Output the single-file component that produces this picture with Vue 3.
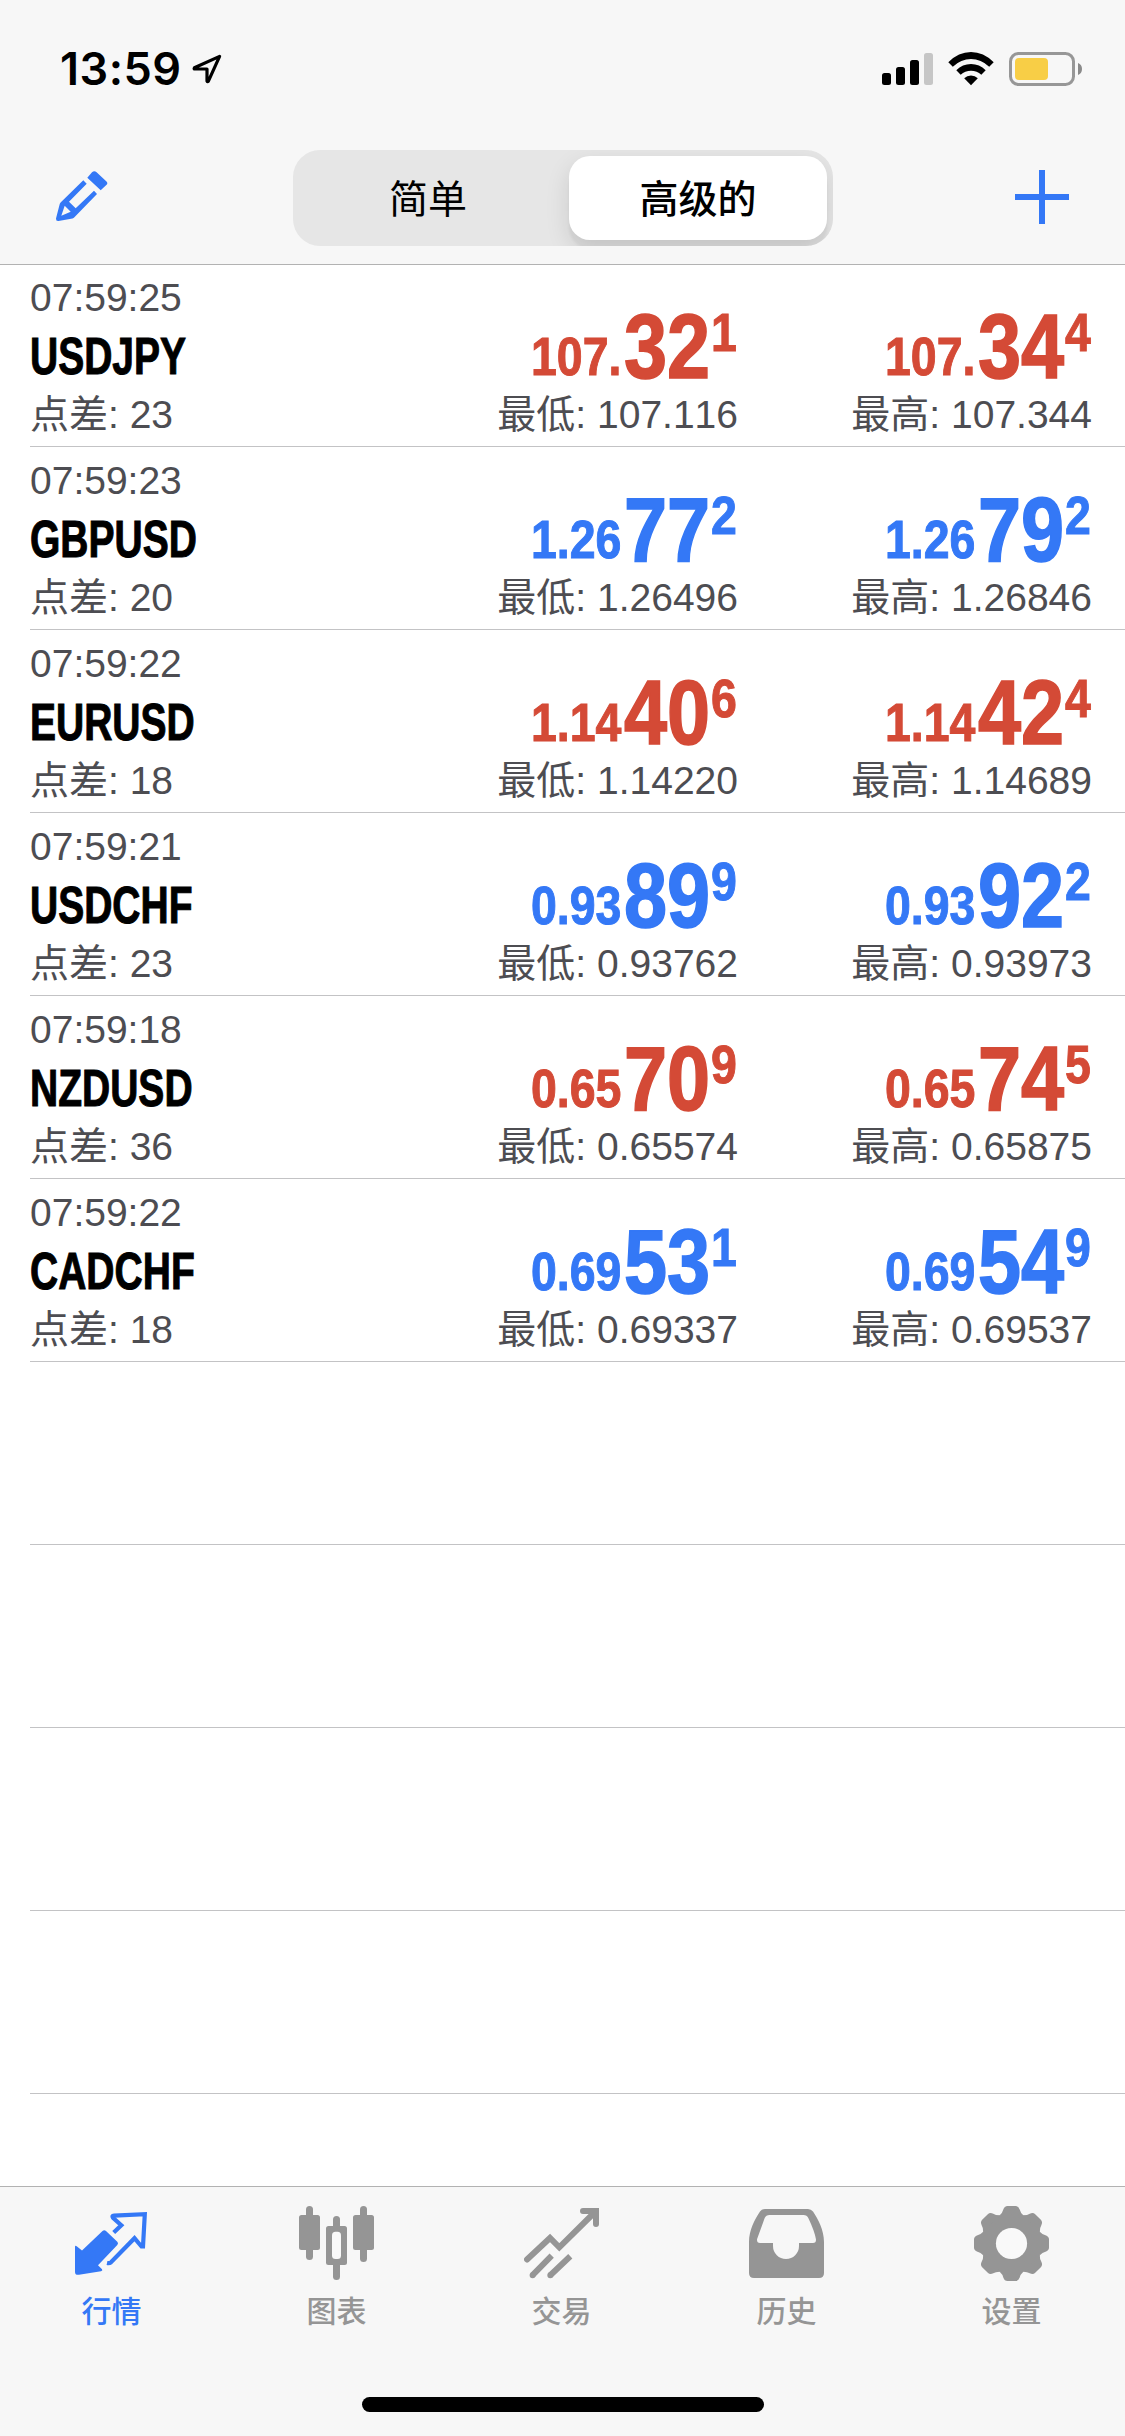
<script setup>
const quotes = [
  { time: '07:59:25', symbol: 'USDJPY', spread: '23', dir: 'down', bid: ['107.', '32', '1'], ask: ['107.', '34', '4'], low: '107.116', high: '107.344' },
  { time: '07:59:23', symbol: 'GBPUSD', spread: '20', dir: 'up', bid: ['1.26', '77', '2'], ask: ['1.26', '79', '2'], low: '1.26496', high: '1.26846' },
  { time: '07:59:22', symbol: 'EURUSD', spread: '18', dir: 'down', bid: ['1.14', '40', '6'], ask: ['1.14', '42', '4'], low: '1.14220', high: '1.14689' },
  { time: '07:59:21', symbol: 'USDCHF', spread: '23', dir: 'up', bid: ['0.93', '89', '9'], ask: ['0.93', '92', '2'], low: '0.93762', high: '0.93973' },
  { time: '07:59:18', symbol: 'NZDUSD', spread: '36', dir: 'down', bid: ['0.65', '70', '9'], ask: ['0.65', '74', '5'], low: '0.65574', high: '0.65875' },
  { time: '07:59:22', symbol: 'CADCHF', spread: '18', dir: 'up', bid: ['0.69', '53', '1'], ask: ['0.69', '54', '9'], low: '0.69337', high: '0.69537' },
]
const sides = [
  { key: 'bid', label: '最低', extreme: 'low' },
  { key: 'ask', label: '最高', extreme: 'high' },
]
const teeth = [0, 45, 90, 135, 180, 225, 270, 315]
</script>

<template>
  <div class="screen">
    <header class="top">
      <div class="status">
        <span class="clock">13:59</span>
        <svg class="location" width="32" height="32" viewBox="0 0 32 32">
          <path d="M28.6 3.4 L3.4 14.8 Q2.6 16 4 16 H16 V28 Q16.4 29.4 17.4 28.2 Z" fill="none" stroke="#000" stroke-width="3.2" stroke-linejoin="round" />
        </svg>
        <svg class="signals" width="204" height="36" viewBox="0 0 204 36">
          <rect x="2" y="22" width="9" height="12" rx="2.5" />
          <rect x="16" y="16" width="9" height="18" rx="2.5" />
          <rect x="30" y="9" width="9" height="25" rx="2.5" />
          <rect x="44" y="2" width="9" height="32" rx="2.5" fill="#c6c6c6" />
          <path d="M68.3 11.2 Q78.5 1 91 1 T113.700 11.200 L109.200 15.700 Q101 8 91 8 T72.800 15.700 Z" />
          <path d="M76.300 19.200 Q82.500 13 91 13 T105.700 19.200 L101.300 23.700 Q97 19.800 91 19.800 T80.700 23.700 Z" />
          <path d="M84.200 27.200 Q87 24.500 91 24.500 T97.800 27.200 L91 34.200 Z" />
          <rect x="130.500" y="2.500" width="63" height="31" rx="8" fill="none" stroke="#979797" stroke-width="3" />
          <rect x="135" y="7" width="33" height="22" rx="4" fill="#f8ce46" />
          <path d="M198 12 Q202 13.500 202 18 T198 24 Z" fill="#8a8a8a" />
        </svg>
      </div>
      <div class="nav">
        <svg class="pencil" width="52" height="52" viewBox="0 0 52 52" fill="#3478f6">
          <path fill-rule="evenodd" d="M27.300 9.300 L4.600 31.600 Q3.800 32.500 3.600 33.500 L0 47.500 Q-0.200 50.300 2.500 50 L16.500 47.400 Q17.600 47.100 18.400 46.300 L41 23 L38 19.700 L19.700 37.300 L13 30.700 L30.700 12.700 Z M8.700 34.700 L5.300 44.700 L14.700 40.700 Z" />
          <path d="M31.300 6.700 L36 1.300 Q38.300 -0.900 40.600 1.300 L50.500 10.500 Q52.300 12.300 50.300 14 L44.700 19.300 Z" />
        </svg>
        <div class="segments">
          <div class="segment">简单</div>
          <div class="segment selected"><span>高级的</span></div>
        </div>
        <svg class="plus" width="54" height="54" viewBox="0 0 54 54">
          <path d="M0 27 H54 M27 0 V54" stroke="#3478f6" stroke-width="6" />
        </svg>
      </div>
    </header>

    <main class="list">
      <section v-for="q in quotes" :key="q.symbol" class="row">
        <div class="info">
          <div class="small">{{ q.time }}</div>
          <div class="symbol"><span>{{ q.symbol }}</span></div>
          <div class="small">点差: {{ q.spread }}</div>
        </div>
        <div v-for="s in sides" :key="s.key" class="side">
          <div class="price" :class="q.dir">
            <div class="lead"><span>{{ q[s.key][0] }}</span></div>
            <div class="big"><span>{{ q[s.key][1] }}</span></div>
            <div class="pip"><span>{{ q[s.key][2] }}</span></div>
          </div>
          <div class="small">{{ s.label }}: {{ q[s.extreme] }}</div>
        </div>
      </section>
      <section v-for="n in 5" :key="n" class="row"></section>
    </main>

    <footer class="bottom">
      <nav class="tabs">
        <div class="tab active">
          <svg width="75" height="75" viewBox="0 0 75 75">
            <path d="M1 41 Q1 39 3 40.500 L8 44.500 L28.500 25 Q30.300 23.300 32 25 L43.300 35.700 Q44.800 37.300 43.300 39 L24 59.300 L28 63.300 Q29 65 27 65.300 L5 68.800 Q1 69.300 1 66 Z" fill="currentColor" />
            <path d="M39.700 26.500 L47.300 19.300 L39 11.800 Q37.500 9.800 40 9.700 L70.800 8.200 L69 40.500 L67.500 40.500 L60.500 32.200 L37 56.300 Q35.500 57.500 33 57" fill="none" stroke="currentColor" stroke-width="4.200" />
          </svg>
          <span>行情</span>
        </div>
        <div class="tab">
          <svg width="75" height="75" viewBox="0 0 75 75" fill="currentColor">
            <rect x="7" y="0" width="7" height="54" rx="3.500" />
            <rect x="0" y="9" width="21" height="35" rx="2.500" />
            <rect x="34" y="10" width="7" height="64" rx="3.500" />
            <rect x="27" y="20" width="21" height="39" rx="2.500" />
            <rect x="33" y="25.700" width="9" height="27.300" rx="3.500" fill="#f9f9f9" />
            <rect x="61" y="0" width="7" height="56" rx="3.500" />
            <rect x="54" y="9" width="21" height="35" rx="2.500" />
          </svg>
          <span>图表</span>
        </div>
        <div class="tab">
          <svg width="75" height="75" viewBox="0 0 75 75" fill="none" stroke="currentColor" stroke-width="6">
            <path d="M3 53.500 L26 32 L35.300 41.300 L71.500 5.500" stroke-linecap="round" />
            <path d="M59 5 H72 V18" stroke-linecap="round" />
            <path d="M8.600 69.200 L27.700 49.700 M26.300 69.200 L46.300 50.300" />
            <path d="M8.600 69.200 h0.010 M26.300 69.200 h0.010" stroke-linecap="round" />
          </svg>
          <span>交易</span>
        </div>
        <div class="tab">
          <svg width="75" height="75" viewBox="0 0 75 75">
            <path fill="currentColor" fill-rule="evenodd" d="M0 36 C0 24 6 13 11 5.500 Q13 3 16 3 H59 Q62 3 64 5.500 C69 13 75 24 75 36 V67 Q75 72 70 72 H5 Q0 72 0 67 Z M20.500 9 H54.500 Q58 9 59.300 12 Q65.500 25 66.900 33 Q67.500 37 64 37 H50 V40 A13 13 0 0 1 24 40 V37 H11 Q7.500 37 8.100 33 L15.700 12 Q17 9 20.500 9 Z" />
          </svg>
          <span>历史</span>
        </div>
        <div class="tab">
          <svg width="75" height="75" viewBox="-37.500 -37.500 75 75" fill="currentColor">
            <circle r="30.600" />
            <path v-for="a in teeth" :key="a" :transform="`rotate(${a})`" d="M-12 -28 Q-8.800 -31 -8.200 -34 Q-7 -37.500 -4 -37.500 H4 Q7 -37.500 8.200 -34 Q8.800 -31 12 -28 Z" />
            <circle r="15.600" fill="#f9f9f9" />
          </svg>
          <span>设置</span>
        </div>
      </nav>
      <div class="home"></div>
    </footer>
  </div>
</template>

<style>
body { margin: 0; background: #fff; }
</style>

<style scoped>
.screen {
  width: 1125px;
  height: 2436px;
  display: flex;
  flex-direction: column;
  overflow: hidden;
  background: #fff;
  font-family: "Liberation Sans", "Noto Sans CJK SC", sans-serif;
  font-kerning: none;
}
.top {
  height: 264px;
  flex: none;
  background: #f7f7f7;
  box-shadow: 0 1px 0 #b2b2b2;
}
.status {
  height: 132px;
  box-sizing: border-box;
  padding: 51px 41px 0 60px;
  display: flex;
  align-items: flex-start;
}
.clock {
  width: 131px;
  font: 600 45px/36px Inter, sans-serif;
  letter-spacing: 0.5px;
}
.location { margin-top: 2px; }
.signals { margin-left: auto; }
.nav {
  height: 132px;
  box-sizing: border-box;
  padding: 18px 56px 18px 56px;
  display: flex;
  align-items: flex-start;
}
.pencil { margin-top: 21px; overflow: visible; }
.plus { margin-top: 20px; margin-left: auto; }
.segments {
  width: 540px;
  height: 96px;
  margin-left: 185px;
  display: flex;
  border-radius: 27px;
  background: #e6e6e6;
  overflow: hidden;
}
.segment {
  width: 270px;
  text-align: center;
  font: 400 39px/92px "Noto Sans CJK SC", sans-serif;
}
.selected { font-weight: 500; }
.selected span {
  display: block;
  height: 84px;
  margin: 6px;
  line-height: 80px;
  border-radius: 21px;
  background: #fff;
  box-shadow: 0 9px 24px rgba(0, 0, 0, 0.12), 0 9px 3px rgba(0, 0, 0, 0.04);
}
.list {
  flex: 1;
  min-height: 0;
  overflow: hidden;
}
.row {
  height: 183px;
  box-sizing: border-box;
  margin-left: 30px;
  padding-right: 33px;
  display: flex;
  border-bottom: 1px solid #c3c3c5;
}
.small {
  font-size: 39px;
  line-height: 57px;
  color: #4d4d52;
  white-space: pre;
}
.info { width: 354px; padding-top: 5px; }
.symbol { height: 60px; }
.symbol span {
  display: inline-block;
  font-size: 51px;
  line-height: 62px;
  font-weight: 700;
  transform: scaleX(0.765);
  transform-origin: left;
  -webkit-text-stroke: 1px currentColor;
}
.side { width: 354px; }
.side .small { text-align: right; }
.price {
  height: 122px;
  display: flex;
  justify-content: flex-end;
  font-weight: 700;
}
.price span {
  display: inline-block;
  transform: scaleX(0.86);
  transform-origin: left;
  -webkit-text-stroke: 1px currentColor;
}
.down { color: #d44a36; }
.up { color: #3478f6; }
.lead, .pip { font-size: 54px; line-height: 62px; }
.lead { width: 93px; margin-top: 61px; }
.big { width: 87px; margin-top: 38px; font-size: 90px; line-height: 90px; }
.big span { -webkit-text-stroke-width: 1.6px; }
.pip { width: 27px; margin-top: 37px; }
.bottom {
  height: 250px;
  flex: none;
  box-sizing: border-box;
  border-top: 1px solid #b2b2b2;
  background: #f7f7f7;
  display: flex;
  flex-direction: column;
  justify-content: space-between;
  align-items: center;
}
.tabs {
  width: 1125px;
  margin-left: -2px;
  padding-top: 19px;
  display: flex;
}
.tab {
  width: 225px;
  display: flex;
  flex-direction: column;
  align-items: center;
  color: #959595;
}
.tab.active { color: #3478f6; }
.tab span {
  margin-top: 6px;
  font: 500 30px/44px "Noto Sans CJK SC", sans-serif;
}
.home {
  width: 402px;
  height: 15px;
  margin-bottom: 24px;
  border-radius: 8px;
  background: #000;
}
</style>
